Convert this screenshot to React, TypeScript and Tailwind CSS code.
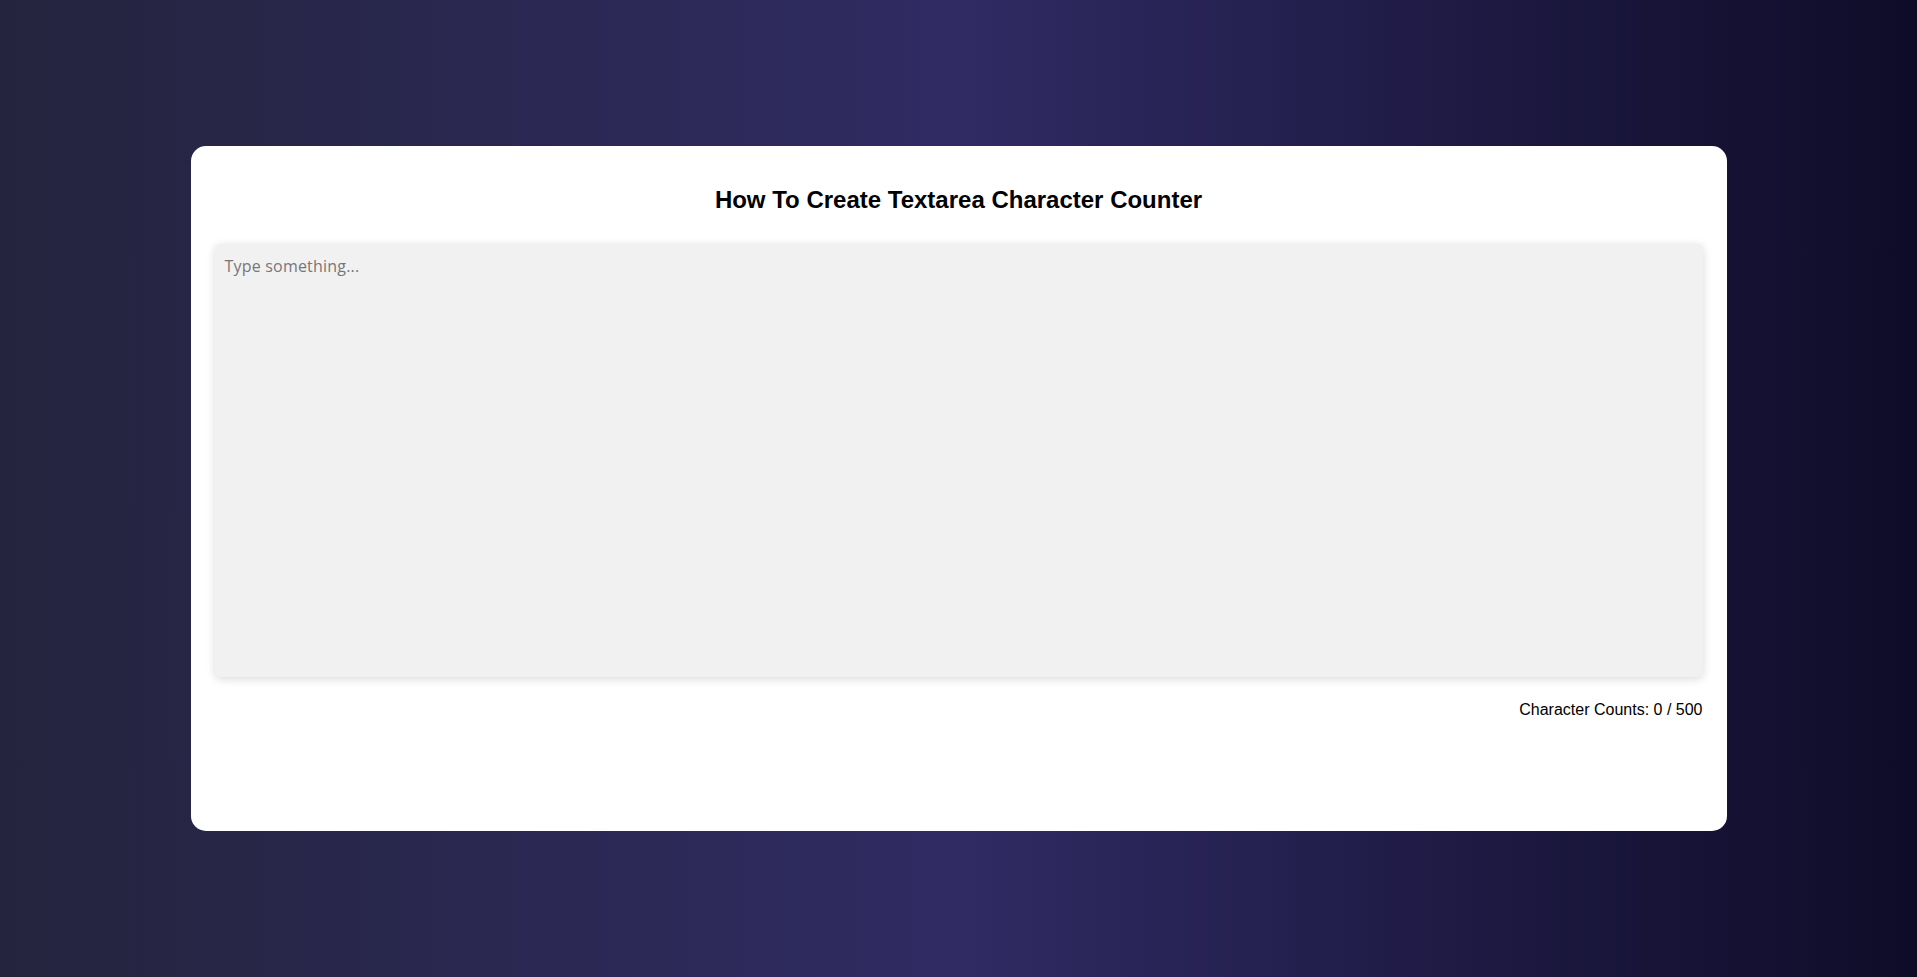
import { useState } from "react";

const MAX_CHARS = 500;

export default function App() {
  const [text, setText] = useState("");

  return (
    <div className="flex h-screen w-full items-center justify-center bg-linear-to-r from-[#24243e] via-[#302b63] to-[#0f0c29] font-['Liberation_Sans',Arial,sans-serif]">
      {/* 카드 */}
      <div className="flex h-[685px] w-[1536px] flex-col rounded-[15px] bg-white px-6 pt-[40px]">
        <h1 className="text-center text-2xl leading-[28px] font-bold text-black">
          How To Create Textarea Character Counter
        </h1>

        <textarea
          value={text}
          maxLength={MAX_CHARS}
          onChange={(e) => setText(e.target.value)}
          placeholder="Type something..."
          className="mt-[30px] h-[433px] w-full resize-none rounded-[5px] bg-[#f1f1f1] p-[10px] font-['Open_Sans',sans-serif] text-base leading-6 tracking-[0.2px] text-[#333] shadow-[0_2px_10px_rgba(0,0,0,0.15)] outline-none placeholder:text-[#777]"
        />

        <p className="mt-[24px] text-right text-base leading-[18px] text-black">
          Character Counts: {text.length} / {MAX_CHARS}
        </p>
      </div>
    </div>
  );
}
